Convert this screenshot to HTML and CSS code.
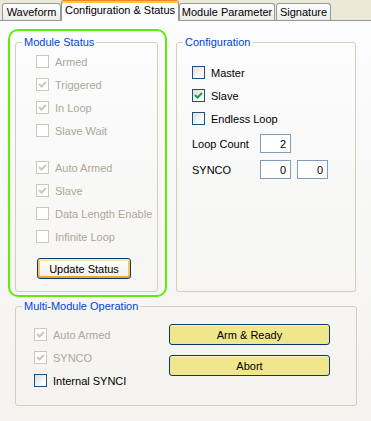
FILE: index.html
```html
<!DOCTYPE html>
<html>
<head>
<meta charset="UTF-8">
<title>Configuration &amp; Status</title>
<link rel="stylesheet" href="styles.css">
</head>
<body>
<div class="tabs">
	<div class="tab tab-wave">Waveform</div>
	<div class="tab tab-conf active">Configuration &amp; Status</div>
	<div class="tab tab-param">Module Parameter</div>
	<div class="tab tab-sig">Signature</div>
</div>
<div class="panel">
	<div class="top">
		<div class="highlight">
			<fieldset class="group status">
				<legend>Module Status</legend>
				<div class="status-body">
					<div class="check off"><span class="box"></span>Armed</div>
					<div class="check off"><span class="box"><svg viewBox="0 0 11 11"><path d="M2 5 L4.5 7.5 L9 3"/></svg></span>Triggered</div>
					<div class="check off"><span class="box"><svg viewBox="0 0 11 11"><path d="M2 5 L4.5 7.5 L9 3"/></svg></span>In Loop</div>
					<div class="check off"><span class="box"></span>Slave Wait</div>
					<div class="spacer"></div>
					<div class="check off"><span class="box"><svg viewBox="0 0 11 11"><path d="M2 5 L4.5 7.5 L9 3"/></svg></span>Auto Armed</div>
					<div class="check off"><span class="box"><svg viewBox="0 0 11 11"><path d="M2 5 L4.5 7.5 L9 3"/></svg></span>Slave</div>
					<div class="check off"><span class="box"></span>Data Length Enable</div>
					<div class="check off"><span class="box"></span>Infinite Loop</div>
					<button class="btn btn-default">Update Status</button>
				</div>
			</fieldset>
		</div>
		<fieldset class="group config">
			<legend>Configuration</legend>
			<div class="config-body">
				<div class="check"><span class="box"></span>Master</div>
				<div class="check"><span class="box"><svg viewBox="0 0 11 11"><path d="M2 5 L4.5 7.5 L9 3"/></svg></span>Slave</div>
				<div class="check"><span class="box"></span>Endless Loop</div>
				<div class="field field-first">
					<span class="field-label">Loop Count</span>
					<input type="text" value="2">
				</div>
				<div class="field">
					<span class="field-label">SYNCO</span>
					<input type="text" value="0">
					<input type="text" value="0">
				</div>
			</div>
		</fieldset>
	</div>
	<fieldset class="group multi">
		<legend>Multi-Module Operation</legend>
		<div class="multi-body">
			<div class="multi-checks">
				<div class="check off"><span class="box"><svg viewBox="0 0 11 11"><path d="M2 5 L4.5 7.5 L9 3"/></svg></span>Auto Armed</div>
				<div class="check off"><span class="box"><svg viewBox="0 0 11 11"><path d="M2 5 L4.5 7.5 L9 3"/></svg></span>SYNCO</div>
				<div class="check"><span class="box"></span>Internal SYNCI</div>
			</div>
			<div class="multi-buttons">
				<button class="btn btn-yellow">Arm &amp; Ready</button>
				<button class="btn btn-yellow">Abort</button>
			</div>
		</div>
	</fieldset>
</div>
</body>
</html>
```
FILE: styles.css
```css
*{
	margin: 0;
	padding: 0;
	box-sizing: border-box;
}
body{
	width: 371px;
	height: 421px;
	overflow: hidden;
	background-color: #ECE9D8;
	font: 11px "Liberation Sans", Arial, sans-serif;
	color: #000;
}

/* tab strip */
.tabs{
	display: flex;
	align-items: flex-end;
	height: 20px;
	padding-left: 2px;
	position: relative;
	z-index: 1;
}
.tab{
	height: 17px;
	border: 1px solid #919B9C;
	border-bottom: none;
	border-radius: 3px 3px 0 0;
	background: linear-gradient(#FFFFFF, #ECEBE6);
	text-align: center;
	line-height: 16px;
	white-space: nowrap;
}
.tab.active{
	height: 21px;
	margin-bottom: -1px;
	border-top: 1px solid #E68B2C;
	background: #FCFCFE;
	box-shadow: inset 0 2px 0 #FFC83C;
	line-height: 16px;
	padding-top: 1px;
}
.tab-wave{ width: 59px; }
.tab-conf{ width: 118px; }
.tab-param{ width: 96px; }
.tab-sig{ width: 55px; margin-left: 1px; }

/* page body */
.panel{
	height: 401px;
	border-top: 1px solid #919B9C;
	background: linear-gradient(#FCFCFE, #F4F3EE);
	padding: 8px 0 0 8px;
}
.top{
	display: flex;
	align-items: flex-start;
}
.highlight{
	width: 159px;
	height: 268px;
	border: 2px solid #5CF000;
	border-radius: 10px;
	padding: 5px 0 0 5px;
}

.group{
	border: 1px solid #D0D0BF;
	border-radius: 3px;
	padding: 0;
	min-width: 0;
}
.group legend{
	margin-left: 6px;
	padding: 0 2px;
	color: #0046D5;
	line-height: 13px;
}
.status{
	width: 143px;
	height: 256px;
}
.config{
	width: 180px;
	height: 256px;
	margin: 7px 0 0 9px;
}
.multi{
	width: 342px;
	height: 106px;
	margin: 3px 0 0 7px;
}

/* checkboxes */
.check{
	display: flex;
	align-items: center;
	height: 23px;
	white-space: nowrap;
}
.box{
	width: 13px;
	height: 13px;
	margin-right: 6px;
	border: 1px solid #1C5180;
	background: linear-gradient(135deg, #DCDCD7, #FFFFFF 80%);
	flex-shrink: 0;
}
.box svg{
	display: block;
	width: 11px;
	height: 11px;
	fill: none;
	stroke: #21A121;
	stroke-width: 2;
}
.check.off{
	color: #ACA899;
}
.check.off .box{
	border-color: #CAC8BB;
	background: #FFFFFF;
}
.check.off .box svg{
	stroke: #CAC8BB;
}

.status-body{
	padding: 1px 0 0 20px;
}
.spacer{
	height: 14px;
}

/* buttons */
.btn{
	display: block;
	height: 21px;
	border: 1px solid #003C74;
	border-radius: 3px;
	font: 11px "Liberation Sans", Arial, sans-serif;
	color: #000;
	background: linear-gradient(#FFFFFF, #F0EFEA);
}
.btn-default{
	width: 94px;
	margin: 10px 0 0 1px;
	box-shadow: inset 0 2px 0 #FFE8A6, inset 0 -2px 0 #EFA33A, inset 2px 0 0 #F8C466, inset -2px 0 0 #F8C466;
}
.btn-yellow{
	width: 161px;
	background: #F0E68C;
	box-shadow: inset 0 1px 0 #FAF3C4;
}

/* configuration */
.config-body{
	padding: 12px 0 0 15px;
}
.field{
	display: flex;
	align-items: center;
	height: 19px;
	margin-top: 7px;
}
.field-first{
	margin-top: 4px;
}
.field-label{
	width: 68px;
}
.field input{
	width: 31px;
	height: 19px;
	margin-right: 6px;
	border: 1px solid #7F9DB9;
	background: #FFFFFF;
	text-align: right;
	padding-right: 4px;
	font: 11px "Liberation Sans", Arial, sans-serif;
	color: #000;
	outline: none;
}

/* multi module */
.multi-body{
	display: flex;
	padding: 10px 0 0 18px;
}
.multi-checks{
	width: 135px;
}
.multi-buttons{
	display: flex;
	flex-direction: column;
	gap: 10px;
	padding-top: 1px;
}
```
